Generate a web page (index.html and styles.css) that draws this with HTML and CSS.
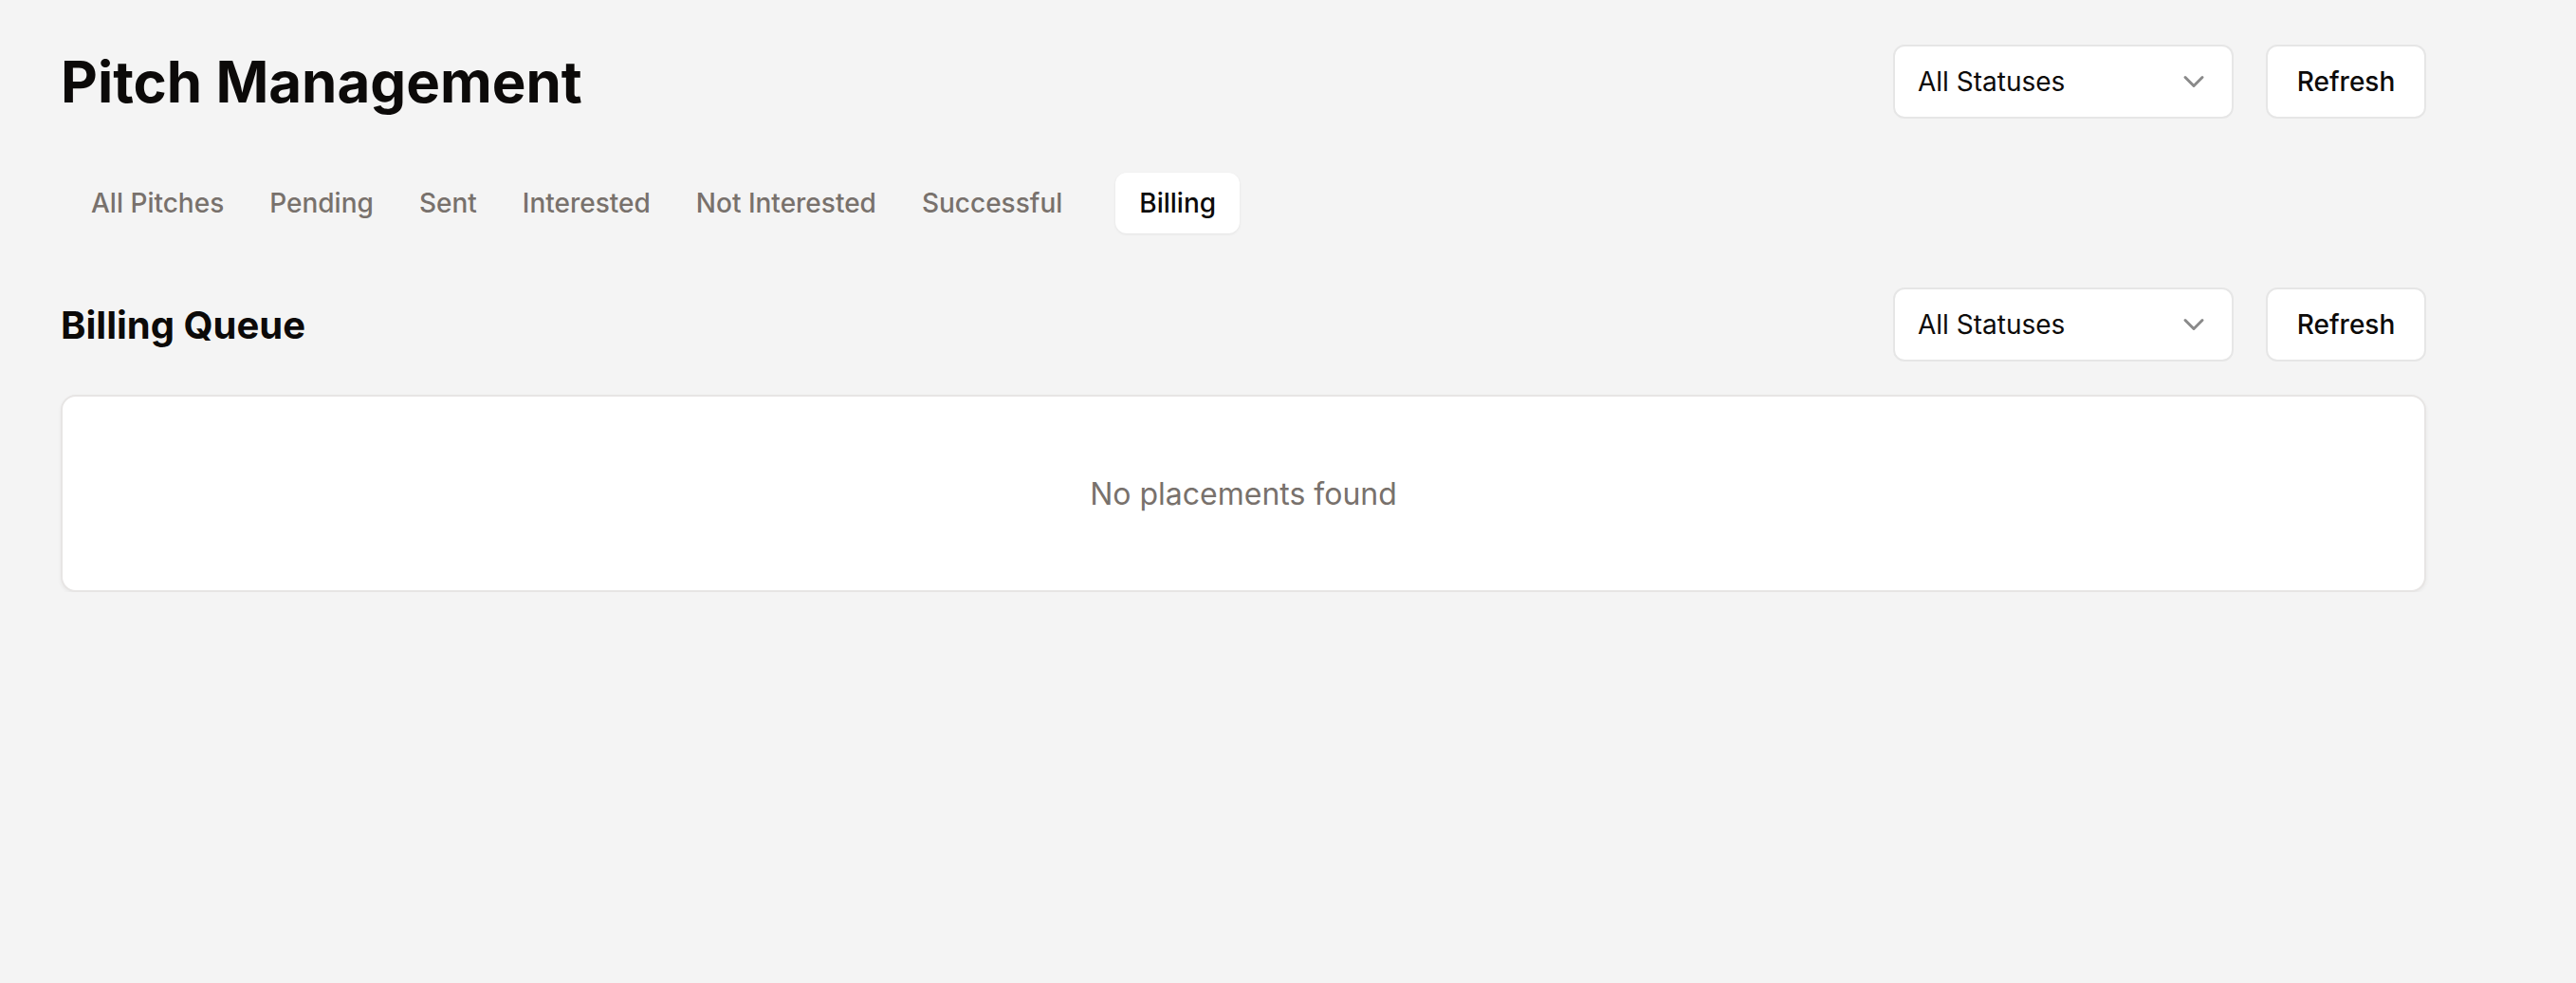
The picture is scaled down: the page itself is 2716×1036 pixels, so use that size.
FILE: index.html
```html
<!DOCTYPE html>
<html lang="en">
<head>
<meta charset="utf-8">
<title>Pitch Management</title>
<link rel="stylesheet" href="styles.css">
</head>
<body>
<div class="page">
  <header class="header">
    <h1 class="title">Pitch Management</h1>
    <div class="controls">
      <div class="select">
        <span>All Statuses</span>
        <svg class="chev" viewBox="0 0 24 24" width="36" height="36" fill="none" stroke="currentColor" stroke-width="2" stroke-linecap="round" stroke-linejoin="round"><path d="m6 9 6 6 6-6"/></svg>
      </div>
      <button class="btn">Refresh</button>
    </div>
  </header>

  <nav class="tabs">
    <div class="tab">All Pitches</div>
    <div class="tab">Pending</div>
    <div class="tab">Sent</div>
    <div class="tab">Interested</div>
    <div class="tab">Not Interested</div>
    <div class="tab">Successful</div>
    <div class="tab tab-active">Billing</div>
  </nav>

  <section class="section">
    <div class="section-head">
      <h2 class="section-title">Billing Queue</h2>
      <div class="controls">
        <div class="select">
          <span>All Statuses</span>
          <svg class="chev" viewBox="0 0 24 24" width="36" height="36" fill="none" stroke="currentColor" stroke-width="2" stroke-linecap="round" stroke-linejoin="round"><path d="m6 9 6 6 6-6"/></svg>
        </div>
        <button class="btn">Refresh</button>
      </div>
    </div>
    <div class="card">
      <p class="empty">No placements found</p>
    </div>
  </section>
</div>
</body>
</html>
```
FILE: styles.css
```css
* { box-sizing: border-box; }

html, body {
  margin: 0;
  padding: 0;
  background: #f4f4f4;
  font-family: Inter, "Noto Sans", "Liberation Sans", sans-serif;
  color: #0c0a09;
}

.page {
  width: 2558px;
  padding: 47px 0 0 64px;
}

.header {
  display: flex;
  justify-content: space-between;
  align-items: center;
}

.title {
  margin: 0;
  font-size: 60px;
  font-weight: 700;
  line-height: 78px;
}

.controls {
  display: flex;
  gap: 34px;
}

.select {
  width: 359px;
  height: 78px;
  background: #fff;
  border: 2px solid #e6e6e6;
  border-radius: 12px;
  display: flex;
  align-items: center;
  justify-content: space-between;
  padding: 0 22px 0 24px;
  font-size: 28px;
  color: #0c0a09;
}

.chev {
  color: #8a8a8a;
  display: block;
}

.btn {
  width: 169px;
  height: 78px;
  background: #fff;
  border: 2px solid #e6e6e6;
  border-radius: 12px;
  font-family: inherit;
  font-size: 28px;
  font-weight: 500;
  color: #0c0a09;
  padding: 0;
}

.tabs {
  margin-top: 57px;
  display: flex;
  align-items: center;
  padding-left: 8px;
  height: 64px;
}

.tab {
  padding: 0 24px;
  height: 64px;
  line-height: 64px;
  font-size: 28px;
  font-weight: 500;
  color: #78716c;
}

.tab-active {
  margin-left: 32px;
  padding: 0 25px;
  background: #fff;
  color: #0c0a09;
  border-radius: 12px;
  box-shadow: 0 1px 3px rgba(0, 0, 0, 0.07);
}

.section {
  margin-top: 57px;
}

.section-head {
  display: flex;
  justify-content: space-between;
  align-items: center;
}

.section-title {
  margin: 0;
  font-size: 40px;
  font-weight: 700;
}

.card {
  margin-top: 35px;
  height: 208px;
  background: #fff;
  border: 2px solid #e7e5e4;
  border-radius: 16px;
  box-shadow: 0 2px 4px rgba(0, 0, 0, 0.05);
  display: flex;
  align-items: center;
  justify-content: center;
}

.empty {
  margin: 0;
  font-size: 32px;
  color: #78716c;
}
```
